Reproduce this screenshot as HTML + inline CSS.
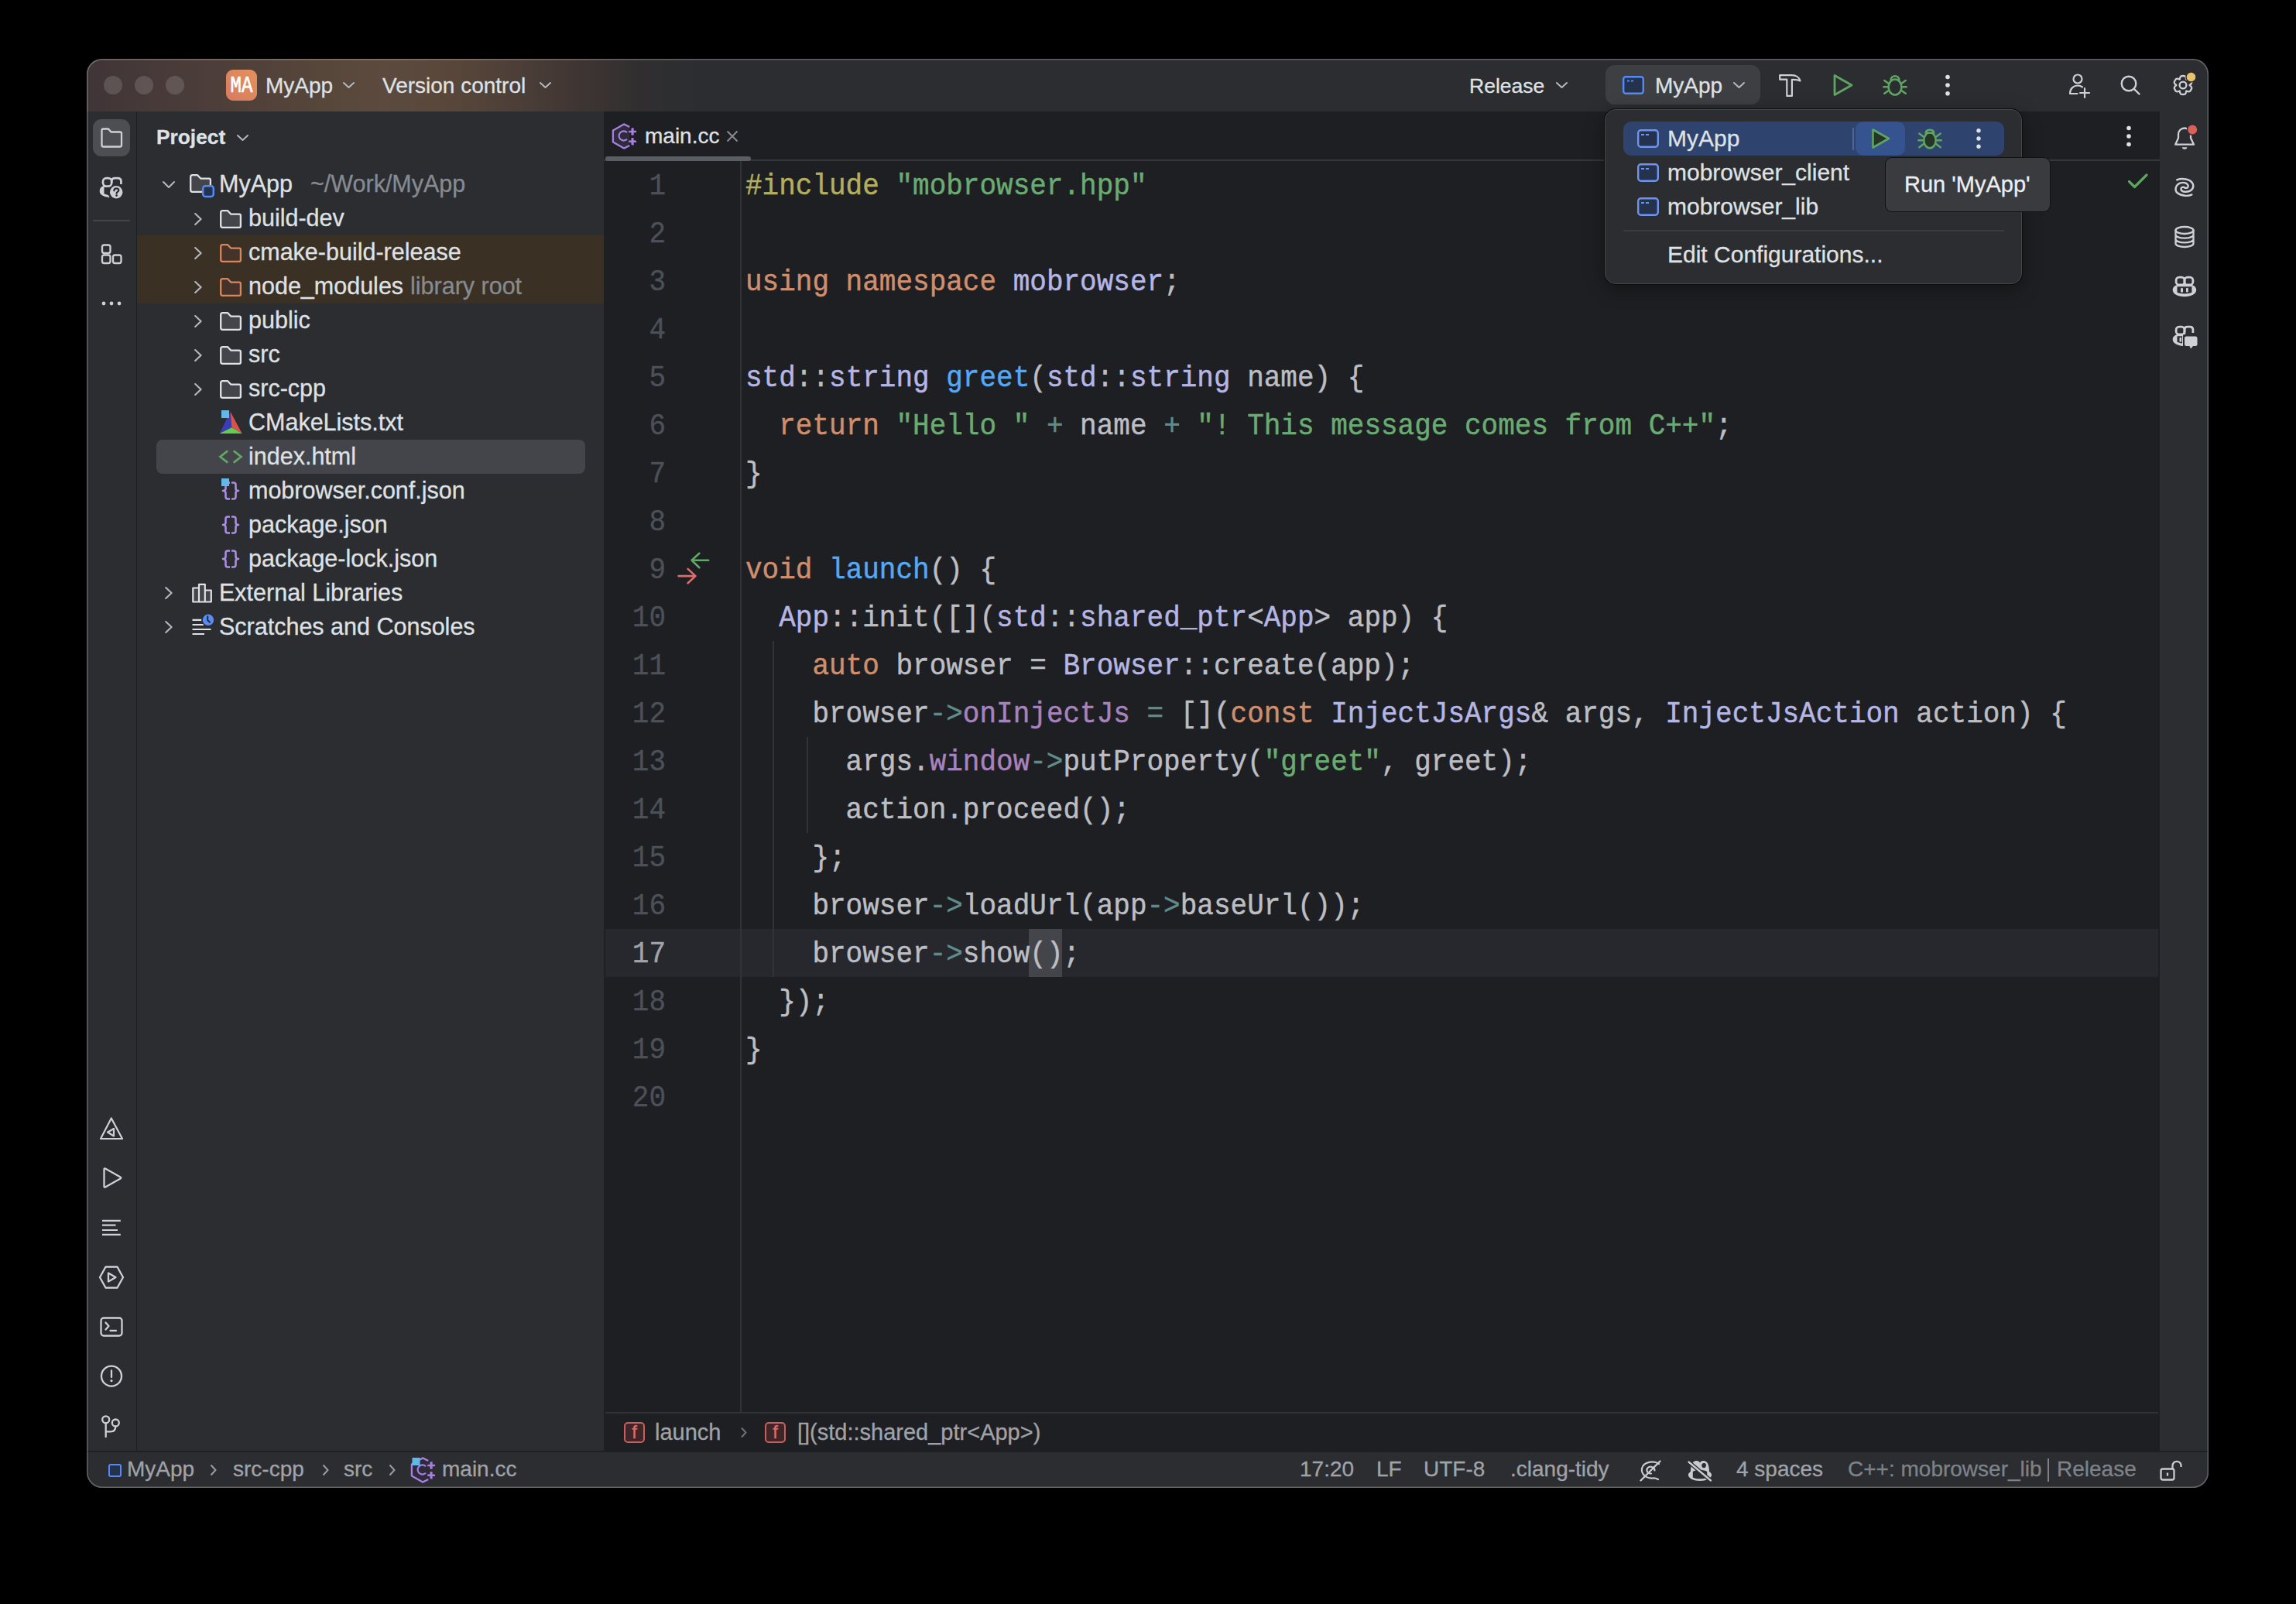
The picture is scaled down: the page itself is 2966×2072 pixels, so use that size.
<!DOCTYPE html>
<html><head><meta charset="utf-8">
<style>
html,body{margin:0;padding:0}
body{width:2966px;height:2072px;background:#000;overflow:hidden;position:relative;font-family:"Liberation Sans",sans-serif;color:#dfe1e5}
.a{position:absolute}
#win{position:absolute;left:112px;top:76px;width:2741px;height:1846px;border-radius:20px;overflow:hidden;background:#2b2d30}
#pg{position:absolute;left:-112px;top:-76px;width:2966px;height:2072px}
#winborder{position:absolute;left:112px;top:76px;width:2741px;height:1846px;border-radius:20px;box-shadow:inset 0 0 0 1.5px rgba(255,255,255,0.26);pointer-events:none}
.t{position:absolute;white-space:pre;line-height:1;-webkit-text-stroke:0.3px currentColor}
svg{position:absolute;overflow:visible}
.ic{fill:none;stroke:#ced0d6;stroke-width:2.4;stroke-linecap:round;stroke-linejoin:round}
.g{stroke:#5fa463}
.code{position:absolute;left:963px;-webkit-text-stroke:0.45px currentColor;transform:scaleY(1.1);transform-origin:0 41px;white-space:pre;font-family:"Liberation Mono",monospace;font-size:36px;line-height:62px;height:62px;color:#bcbec4}
.ln{position:absolute;left:760px;-webkit-text-stroke:0.35px currentColor;transform:scaleY(1.08);transform-origin:0 41px;width:100px;text-align:right;white-space:pre;font-family:"Liberation Mono",monospace;font-size:36px;line-height:62px;height:62px;color:#4b5059}
.ln.cur{color:#a1a3ab}
.k{color:#cf8e6d}.s{color:#6aab73}.f{color:#56a8f5}.ty{color:#b5b6e3}.pp{color:#b3ae60}.fd{color:#a783bd}.op{color:#5f8c8a}
.tr{font-size:30.5px;color:#dfe1e5}
.gr{color:#868a91}
.st{font-size:28px;color:#a0a3a9}
</style></head>
<body>
<div id="win"><div id="pg">
<!-- chrome -->
  <div class="a" style="left:112px;top:76px;width:2741px;height:68px;background:#2b2d30"></div>
  <div class="a" style="left:112px;top:76px;width:820px;height:68px;background:linear-gradient(90deg,#403537 0px,#4a3c39 130px,#564539 290px,#5c4a3f 380px,#584739 470px,#4d3f38 550px,#3e3533 640px,#312f30 710px,#2b2d30 790px)"></div>
  <div class="a" style="left:112px;top:144px;width:64px;height:1730px;background:#2b2d30"></div>
  <div class="a" style="left:176px;top:144px;width:1px;height:1730px;background:#1e1f22"></div>
  <div class="a" style="left:177px;top:144px;width:603px;height:1730px;background:#2b2d30"></div>
  <div class="a" style="left:780px;top:144px;width:2010px;height:1730px;background:#1e1f22"></div>
  <div class="a" style="left:2790px;top:144px;width:63px;height:1730px;background:#2b2d30"></div>
  <div class="a" style="left:112px;top:1874px;width:2741px;height:2px;background:#1e1f22"></div>
  <div class="a" style="left:112px;top:1876px;width:2741px;height:46px;background:#2b2d30"></div>

<!-- titlebar -->
  <div class="a" style="left:134px;top:98px;width:24px;height:24px;border-radius:50%;background:rgba(255,255,255,0.14)"></div>
  <div class="a" style="left:174px;top:98px;width:24px;height:24px;border-radius:50%;background:rgba(255,255,255,0.14)"></div>
  <div class="a" style="left:214px;top:98px;width:24px;height:24px;border-radius:50%;background:rgba(255,255,255,0.14)"></div>
  <div class="a" style="left:292px;top:90px;width:40px;height:40px;border-radius:9px;background:linear-gradient(45deg,#d87a5e,#e3925f)"></div>
  <div class="t" style="left:295px;top:100px;width:34px;text-align:center;font-family:'Liberation Mono',monospace;font-size:24px;-webkit-text-stroke:0.6px #fff;color:#fff;transform:scaleY(1.2);transform-origin:50% 50%">MA</div>
  <div class="t" style="left:343px;top:97px;font-size:28px;color:#dfe1e5">MyApp</div>
  <svg style="left:443px;top:106px" width="15" height="8"><path class="ic" style="stroke:#b4b8bf;stroke-width:2" d="M1 1L7.5 7L14 1"/></svg>
  <div class="t" style="left:494px;top:97px;font-size:28px;color:#dfe1e5">Version control</div>
  <svg style="left:697px;top:106px" width="15" height="8"><path class="ic" style="stroke:#b4b8bf;stroke-width:2" d="M1 1L7.5 7L14 1"/></svg>
  <div class="t" style="left:1898px;top:98px;font-size:26.5px;color:#dfe1e5">Release</div>
  <svg style="left:2010px;top:106px" width="15" height="8"><path class="ic" style="stroke:#b4b8bf;stroke-width:2" d="M1 1L7.5 7L14 1"/></svg>
  <div class="a" style="left:2074px;top:84px;width:200px;height:51px;border-radius:12px;background:#3d3f43"></div>
  <svg style="left:2096px;top:98px" width="28" height="24"><rect x="1.2" y="1.2" width="25.6" height="21.6" rx="3" fill="#25324d" stroke="#548af7" stroke-width="2.4"/><path d="M6 6.5h3M11 6.5h3" stroke="#548af7" stroke-width="2"/></svg>
  <div class="t" style="left:2138px;top:97px;font-size:28px;color:#dfe1e5">MyApp</div>
  <svg style="left:2239px;top:106px" width="15" height="8"><path class="ic" style="stroke:#b4b8bf;stroke-width:2" d="M1 1L7.5 7L14 1"/></svg>
  <!-- hammer -->
  <svg style="left:2296px;top:94px" width="32" height="32" viewBox="0 0 32 32"><path class="ic" style="stroke-width:2.2" d="M3.2 3.2H19C24 3.2 28.3 6 29.5 10.5C27.2 9.2 24 8.7 18.9 8.9V29.9H12.3V8.7H3.2Z"/></svg>
  <!-- run -->
  <svg style="left:2364px;top:94px" width="32" height="32" viewBox="0 0 32 32"><path class="ic g" style="stroke-width:2.8" d="M6 3.5L28 16L6 28.5Z"/></svg>
  <!-- bug -->
  <svg style="left:2432px;top:94px" width="32" height="32" viewBox="0 0 32 32"><g class="ic g" style="stroke-width:2.6"><ellipse cx="16" cy="18.5" rx="8.4" ry="10"/><path d="M10.8 9.2C10.8 2.6 21.2 2.6 21.2 9.2"/><path d="M7.6 13.7L2.3 10M7.6 18.2H1.3M8 22.8L2.3 26.8M24.4 13.7L29.7 10M24.4 18.2H30.7M24 22.8L29.7 26.8"/></g></svg>
  <!-- kebab -->
  <svg style="left:2508px;top:94px" width="16" height="32"><circle cx="8" cy="5.5" r="2.8" fill="#dfe1e5"/><circle cx="8" cy="16" r="2.8" fill="#dfe1e5"/><circle cx="8" cy="26.8" r="2.8" fill="#dfe1e5"/></svg>
  <!-- person+ -->
  <svg style="left:2668px;top:94px" width="32" height="32" viewBox="0 0 32 32"><g class="ic" style="stroke-width:2.2"><circle cx="16" cy="8" r="5.5"/><path d="M15.5 27H6C6 20 11 16.5 16 16.5C18.5 16.5 20.5 17.2 22 18.3"/><path d="M25 20V32M19 26H31"/></g></svg>
  <!-- search -->
  <svg style="left:2735px;top:94px" width="32" height="32" viewBox="0 0 32 32"><g class="ic" style="stroke-width:2.4"><circle cx="15" cy="14" r="9.3"/><path d="M21.8 20.8L28.5 27.5"/></g></svg>
  <!-- gear -->
  <svg style="left:2804px;top:94px" width="32" height="32" viewBox="0 0 32 32"><g class="ic" style="stroke-width:2.3"><path d="M13.51 4.26A12.0 12.0 0 0 1 18.49 4.26Q19.93 5.19 20.30 8.55Q23.39 7.19 24.92 7.97A12.0 12.0 0 0 1 27.41 12.29Q27.33 14.00 24.60 16.00Q27.33 18.00 27.41 19.71A12.0 12.0 0 0 1 24.92 24.03Q23.39 24.81 20.30 23.45Q19.93 26.81 18.49 27.74A12.0 12.0 0 0 1 13.51 27.74Q12.07 26.81 11.70 23.45Q8.61 24.81 7.08 24.03A12.0 12.0 0 0 1 4.59 19.71Q4.67 18.00 7.40 16.00Q4.67 14.00 4.59 12.29A12.0 12.0 0 0 1 7.08 7.97Q8.61 7.19 11.70 8.55Q12.07 5.19 13.51 4.26Z"/><circle cx="16" cy="16" r="4.4"/></g><circle cx="26.5" cy="5.5" r="7.2" fill="#2b2d30"/><circle cx="26.5" cy="5.5" r="5.8" fill="#e9c46d"/></svg>

<!-- leftstripe -->
  <div class="a" style="left:120px;top:154px;width:48px;height:48px;border-radius:11px;background:#4c4e52"></div>
  <svg style="left:128px;top:162px" width="32" height="32" viewBox="0 0 32 32"><path class="ic" style="stroke-width:2.3" d="M3.5 6.5Q3.5 4.5 5.5 4.5H12L15.5 8.5H27Q29 8.5 29 10.5V25.5Q29 27.5 27 27.5H5.5Q3.5 27.5 3.5 25.5Z"/></svg>
  <!-- people ? -->
  <svg style="left:128px;top:226px" width="32" height="32" viewBox="0 0 32 32"><g fill="none" stroke="#ced0d6" stroke-width="2.7" stroke-linejoin="round"><rect x="5" y="4.1" width="11.2" height="10.4" rx="4.2"/><path d="M16.2 10V8.3Q16.2 4.1 20.4 4.1H24.2Q28.4 4.1 28.4 8.3V12"/></g><path fill="#ced0d6" d="M5.2 14.2C2.3 15.2 0.7 17.8 0.7 20.8C0.7 25 4.2 28 13.5 29.2C13 27.6 12.3 26.3 11 25.7C8.5 25 6.5 24.5 6.5 24.5V15.8H12.5L11.5 14.2Z"/><circle cx="22.2" cy="22.2" r="9.3" fill="#2b2d30"/><circle cx="22.2" cy="22.2" r="8.2" fill="#ced0d6"/><path d="M19.4 20.3C19.4 18.4 20.8 17.4 22.4 17.4C24.1 17.4 25.3 18.4 25.3 19.8C25.3 21.6 22.6 21.7 22.6 23.8" fill="none" stroke="#2b2d30" stroke-width="2.3" stroke-linecap="round"/><circle cx="22.6" cy="26.6" r="1.4" fill="#2b2d30"/></svg>
  <div class="a" style="left:120px;top:284px;width:48px;height:2px;background:#43454a"></div>
  <!-- structure -->
  <svg style="left:128px;top:312px" width="32" height="32" viewBox="0 0 32 32"><g class="ic" style="stroke-width:2.3"><rect x="4" y="4.5" width="10.5" height="10.5" rx="2.5"/><rect x="4" y="17.5" width="10.5" height="10.5" rx="2.5"/><rect x="18" y="17.5" width="10.5" height="10.5" rx="2.5"/></g></svg>
  <svg style="left:128px;top:376px" width="32" height="32"><circle cx="6" cy="16" r="2.4" fill="#ced0d6"/><circle cx="16" cy="16" r="2.4" fill="#ced0d6"/><circle cx="26" cy="16" r="2.4" fill="#ced0d6"/></svg>
  <!-- bottom: cmake outline -->
  <svg style="left:128px;top:1442px" width="32" height="32" viewBox="0 0 32 32"><g class="ic" style="stroke-width:2.2"><path d="M15.8 2.5L30 29H2Z"/><path d="M11 20.5L19 16V25.5Z"/></g></svg>
  <!-- run -->
  <svg style="left:128px;top:1506px" width="32" height="32" viewBox="0 0 32 32"><path class="ic" style="stroke-width:2.3" d="M6.5 4.5Q6.5 2.8 8 3.6L27.5 14.5Q29 15.5 27.5 16.5L8 27.4Q6.5 28.2 6.5 26.5Z"/></svg>
  <!-- lines -->
  <svg style="left:128px;top:1570px" width="32" height="32" viewBox="0 0 32 32"><g class="ic" style="stroke-width:2.2;stroke-linecap:butt"><path d="M4 6.8H27.8M4 12.7H21.5M4 19H24M4 24.9H27.8"/></g></svg>
  <!-- services hexagon -->
  <svg style="left:128px;top:1634px" width="32" height="32" viewBox="0 0 32 32"><g class="ic" style="stroke-width:2.3"><path d="M8.5 2.5H23.5L31 16L23.5 29.5H8.5L1 16Z"/><path d="M12 10.5V21.5L21.5 16Z"/></g></svg>
  <!-- terminal -->
  <svg style="left:128px;top:1698px" width="32" height="32" viewBox="0 0 32 32"><g class="ic" style="stroke-width:2.3"><rect x="2.5" y="4.5" width="27" height="23" rx="3.5"/><path d="M8.5 10.5L12.5 15L8.5 19.5M14.5 20.8H22"/></g></svg>
  <!-- problems -->
  <svg style="left:128px;top:1762px" width="32" height="32" viewBox="0 0 32 32"><g class="ic" style="stroke-width:2.3"><circle cx="16" cy="15.6" r="13"/><path d="M16 8.5V17"/></g><circle cx="16" cy="21.6" r="1.6" fill="#ced0d6"/></svg>
  <!-- git -->
  <svg style="left:128px;top:1826px" width="32" height="32" viewBox="0 0 32 32"><g class="ic" style="stroke-width:2.3"><circle cx="8.7" cy="7.8" r="4.5"/><circle cx="21.3" cy="12" r="4.5"/><path d="M8.7 12.3V30M21.3 16.5C21.3 21 19 23.4 14.5 23.4H8.7"/></g></svg>

<!-- tree -->
  <div class="t" style="left:202px;top:164px;font-size:26.3px;font-weight:bold;color:#dfe1e5">Project</div>
  <svg style="left:306px;top:174px" width="15" height="8"><path class="ic" style="stroke:#b4b8bf;stroke-width:2" d="M1 1L7.5 7L14 1"/></svg>
  <div class="a" style="left:177px;top:304px;width:603px;height:88px;background:#3a3024"></div>
  <div class="a" style="left:202px;top:568px;width:554px;height:44px;border-radius:8px;background:#43454a"></div>
  <svg style="left:210px;top:234px" width="16" height="9"><path class="ic" style="stroke:#b4b8bf;stroke-width:2.1" d="M1 1L8 8L15 1"/></svg>
  <svg style="left:245px;top:225px" width="32" height="30"><path d="M1.2 3.6Q1.2 1.2 3.6 1.2H10.2L14.2 5.6H25Q26.9 5.6 26.9 7.6V21Q26.9 22.8 25 22.8H3.5Q1.2 22.8 1.2 20.6Z" fill="#43454a" stroke="#dfe1e5" stroke-width="2.3" stroke-linejoin="round"/><rect x="17.2" y="15.3" width="13.6" height="13.6" rx="3.2" fill="#25324d" stroke="#548af7" stroke-width="2.5"/></svg>
  <div class="t tr" style="left:283px;top:222px">MyApp</div>
  <div class="t tr gr" style="left:401px;top:222px">~/Work/MyApp</div>
  <svg style="left:251px;top:275px" width="10" height="16"><path class="ic" style="stroke:#b4b8bf;stroke-width:2.1" d="M1.2 1L8.6 8L1.2 15"/></svg>
  <svg style="left:284px;top:271px" width="28" height="24"><path d="M1.2 3.6Q1.2 1.2 3.6 1.2H10.2L14.2 5.6H25Q26.9 5.6 26.9 7.6V21Q26.9 22.8 25 22.8H3.5Q1.2 22.8 1.2 20.6Z" fill="#43454a" stroke="#dfe1e5" stroke-width="2.3" stroke-linejoin="round"/></svg>
  <div class="t tr" style="left:321px;top:266px">build-dev</div>
  <svg style="left:251px;top:319px" width="10" height="16"><path class="ic" style="stroke:#b4b8bf;stroke-width:2.1" d="M1.2 1L8.6 8L1.2 15"/></svg>
  <svg style="left:284px;top:315px" width="28" height="24"><path d="M1.2 3.6Q1.2 1.2 3.6 1.2H10.2L14.2 5.6H25Q26.9 5.6 26.9 7.6V21Q26.9 22.8 25 22.8H3.5Q1.2 22.8 1.2 20.6Z" fill="#45332b" stroke="#d8875d" stroke-width="2.3" stroke-linejoin="round"/></svg>
  <div class="t tr" style="left:321px;top:310px">cmake-build-release</div>
  <svg style="left:251px;top:363px" width="10" height="16"><path class="ic" style="stroke:#b4b8bf;stroke-width:2.1" d="M1.2 1L8.6 8L1.2 15"/></svg>
  <svg style="left:284px;top:359px" width="28" height="24"><path d="M1.2 3.6Q1.2 1.2 3.6 1.2H10.2L14.2 5.6H25Q26.9 5.6 26.9 7.6V21Q26.9 22.8 25 22.8H3.5Q1.2 22.8 1.2 20.6Z" fill="#45332b" stroke="#d8875d" stroke-width="2.3" stroke-linejoin="round"/></svg>
  <div class="t tr gr" style="left:530px;top:354px">library root</div>
  <div class="t tr" style="left:321px;top:354px">node_modules</div>
  <svg style="left:251px;top:407px" width="10" height="16"><path class="ic" style="stroke:#b4b8bf;stroke-width:2.1" d="M1.2 1L8.6 8L1.2 15"/></svg>
  <svg style="left:284px;top:403px" width="28" height="24"><path d="M1.2 3.6Q1.2 1.2 3.6 1.2H10.2L14.2 5.6H25Q26.9 5.6 26.9 7.6V21Q26.9 22.8 25 22.8H3.5Q1.2 22.8 1.2 20.6Z" fill="#43454a" stroke="#dfe1e5" stroke-width="2.3" stroke-linejoin="round"/></svg>
  <div class="t tr" style="left:321px;top:398px">public</div>
  <svg style="left:251px;top:451px" width="10" height="16"><path class="ic" style="stroke:#b4b8bf;stroke-width:2.1" d="M1.2 1L8.6 8L1.2 15"/></svg>
  <svg style="left:284px;top:447px" width="28" height="24"><path d="M1.2 3.6Q1.2 1.2 3.6 1.2H10.2L14.2 5.6H25Q26.9 5.6 26.9 7.6V21Q26.9 22.8 25 22.8H3.5Q1.2 22.8 1.2 20.6Z" fill="#43454a" stroke="#dfe1e5" stroke-width="2.3" stroke-linejoin="round"/></svg>
  <div class="t tr" style="left:321px;top:442px">src</div>
  <svg style="left:251px;top:495px" width="10" height="16"><path class="ic" style="stroke:#b4b8bf;stroke-width:2.1" d="M1.2 1L8.6 8L1.2 15"/></svg>
  <svg style="left:284px;top:491px" width="28" height="24"><path d="M1.2 3.6Q1.2 1.2 3.6 1.2H10.2L14.2 5.6H25Q26.9 5.6 26.9 7.6V21Q26.9 22.8 25 22.8H3.5Q1.2 22.8 1.2 20.6Z" fill="#43454a" stroke="#dfe1e5" stroke-width="2.3" stroke-linejoin="round"/></svg>
  <div class="t tr" style="left:321px;top:486px">src-cpp</div>
  <svg style="left:283px;top:529px" width="31" height="32"><polygon points="14.6,2.7 0.6,31 16.3,23.2" fill="#3b3db8"/><polygon points="14.6,2.7 16.3,23.2 29.7,31" fill="#d9534b"/><polygon points="0.6,31 16.3,23.2 29.7,31" fill="#5fd04d"/><rect x="3" y="1" width="10" height="10" fill="#61b9e8"/></svg>
  <div class="t tr" style="left:321px;top:530px">CMakeLists.txt</div>
  <svg style="left:283px;top:580px" width="30" height="20"><path d="M11.2 2.4L1.4 10L11.2 17.6M18.7 2.4L28.6 10L18.7 17.6" fill="none" stroke="#62a766" stroke-width="2.6"/></svg>
  <div class="t tr" style="left:321px;top:574px">index.html</div>
  <svg style="left:286px;top:622px" width="24" height="24"><path d="M11 1.5H8.2Q5.5 1.5 5.5 4.2V9.3Q5.5 12 2 12Q5.5 12 5.5 14.7V19.8Q5.5 22.5 8.2 22.5H11M13 1.5H15.8Q18.5 1.5 18.5 4.2V9.3Q18.5 12 22 12Q18.5 12 18.5 14.7V19.8Q18.5 22.5 15.8 22.5H13" fill="none" stroke="#ab8de3" stroke-width="2.6" stroke-linejoin="round"/></svg>
  <div class="a" style="left:286px;top:618px;width:10px;height:10px;background:#61b9e8"></div>
  <div class="t tr" style="left:321px;top:618px">mobrowser.conf.json</div>
  <svg style="left:286px;top:666px" width="24" height="24"><path d="M11 1.5H8.2Q5.5 1.5 5.5 4.2V9.3Q5.5 12 2 12Q5.5 12 5.5 14.7V19.8Q5.5 22.5 8.2 22.5H11M13 1.5H15.8Q18.5 1.5 18.5 4.2V9.3Q18.5 12 22 12Q18.5 12 18.5 14.7V19.8Q18.5 22.5 15.8 22.5H13" fill="none" stroke="#ab8de3" stroke-width="2.6" stroke-linejoin="round"/></svg>
  <div class="t tr" style="left:321px;top:662px">package.json</div>
  <svg style="left:286px;top:710px" width="24" height="24"><path d="M11 1.5H8.2Q5.5 1.5 5.5 4.2V9.3Q5.5 12 2 12Q5.5 12 5.5 14.7V19.8Q5.5 22.5 8.2 22.5H11M13 1.5H15.8Q18.5 1.5 18.5 4.2V9.3Q18.5 12 22 12Q18.5 12 18.5 14.7V19.8Q18.5 22.5 15.8 22.5H13" fill="none" stroke="#ab8de3" stroke-width="2.6" stroke-linejoin="round"/></svg>
  <div class="t tr" style="left:321px;top:706px">package-lock.json</div>
  <svg style="left:213px;top:758px" width="10" height="16"><path class="ic" style="stroke:#b4b8bf;stroke-width:2.1" d="M1.2 1L8.6 8L1.2 15"/></svg>
  <svg style="left:247px;top:753px" width="28" height="26"><path d="M2.3 6.5H10V1.8H17.8V9.5H25.8V24.5H2.3Z M10 6.5V24.5 M17.8 9.5V24.5" fill="#43454a" stroke="#dfe1e5" stroke-width="2.2" stroke-linejoin="round"/></svg>
  <div class="t tr" style="left:283px;top:750px">External Libraries</div>
  <svg style="left:213px;top:802px" width="10" height="16"><path class="ic" style="stroke:#b4b8bf;stroke-width:2.1" d="M1.2 1L8.6 8L1.2 15"/></svg>
  <svg style="left:247px;top:790px" width="32" height="32"><path d="M1.5 10.8H13.5M1.5 17H16M1.5 23H25.5M1.5 29H17" stroke="#dfe1e5" stroke-width="2.2"/><circle cx="22" cy="10.8" r="8" fill="#5b8af0" stroke="#2b2d30" stroke-width="1.6"/><path d="M21.2 6.2V11L24 13.8" fill="none" stroke="#1e2a4a" stroke-width="2" stroke-linecap="round"/></svg>
  <div class="t tr" style="left:283px;top:794px">Scratches and Consoles</div>

<!-- editor -->
  <!-- tab bar -->
  <div class="a" style="left:780px;top:206px;width:2010px;height:2px;background:#35373b"></div>
  <div class="a" style="left:782px;top:202px;width:188px;height:6px;border-radius:3px;background:#5a5d63"></div>
  <svg style="left:790px;top:159px" width="34" height="34" viewBox="0 0 34 34"><path d="M23.3 5L16 1.4L1.9 9.6V24.4L16 32.6L23.3 29" fill="#2e2b3a" stroke="#a87fe0" stroke-width="2.3" stroke-linejoin="round"/><path d="M20 12.2A6.1 6.1 0 1 0 20 20.8" fill="none" stroke="#a87fe0" stroke-width="2.2"/><path d="M27.5 6.2V15.4M22.9 10.8H32.1M27.5 19.3V28.5M22.9 23.9H32.1" stroke="#a87fe0" stroke-width="2.3"/><path d="M26.6 6.8V15.6M22.2 11.2H31M26.6 19.2V28M22.2 23.6H31" stroke="#a87fe0" stroke-width="2.3"/></svg>
  <div class="t" style="left:833px;top:162px;font-size:28px;color:#dfe1e5">main.cc</div>
  <svg style="left:938px;top:168px" width="16" height="16"><path d="M1.5 1.5L14.5 14.5M14.5 1.5L1.5 14.5" stroke="#868a91" stroke-width="2"/></svg>
  <svg style="left:2742px;top:160px" width="16" height="32"><circle cx="8" cy="5.5" r="2.8" fill="#dfe1e5"/><circle cx="8" cy="16" r="2.8" fill="#dfe1e5"/><circle cx="8" cy="26.5" r="2.8" fill="#dfe1e5"/></svg>
  <svg style="left:2748px;top:222px" width="28" height="24"><path d="M2.5 12.5L9.5 19.5L25 4" fill="none" stroke="#5fa463" stroke-width="3.2" stroke-linecap="round" stroke-linejoin="round"/></svg>
  <!-- current line -->
  <div class="a" style="left:782px;top:1200px;width:2006px;height:62px;background:#26282e"></div>
  <div class="a" style="left:1329px;top:1200px;width:43px;height:62px;background:#43454a"></div>
  <!-- gutter separator & indent guides -->
  <div class="a" style="left:956px;top:208px;width:2px;height:1616px;background:#313338"></div>
  <div class="a" style="left:998px;top:828px;width:2px;height:434px;background:#313338"></div>
  <div class="a" style="left:1042px;top:952px;width:2px;height:124px;background:#313338"></div>
  <!-- gutter arrows line 9 -->
  <svg style="left:870px;top:708px" width="50" height="50"><g fill="none" stroke-width="2.6" stroke-linecap="round" stroke-linejoin="round"><path d="M45.2 15.8H23.6M33.4 6.8L23.6 15.8L33.4 25.2" stroke="#62a766"/><path d="M6.6 36.1H28.4M18.6 26.9L28.4 36.1L18.6 45.3" stroke="#e06c6c"/></g></svg>
  <!-- breadcrumbs -->
  <div class="a" style="left:782px;top:1824px;width:2006px;height:2px;background:#2f3135"></div>
  <div class="a" style="left:806px;top:1837px;width:23px;height:23px;border:2px solid #c9605d;border-radius:5px;background:#3d2528"></div>
  <div class="t" style="left:806px;top:1838px;width:27px;text-align:center;font-size:24px;color:#e06c6c">f</div>
  <div class="t" style="left:846px;top:1836px;font-size:29px;color:#a0a3a9">launch</div>
  <svg style="left:956px;top:1843px" width="10" height="15"><path d="M2 1.5L7.5 7.5L2 13.5" fill="none" stroke="#6f737a" stroke-width="2"/></svg>
  <div class="a" style="left:988px;top:1837px;width:23px;height:23px;border:2px solid #c9605d;border-radius:5px;background:#3d2528"></div>
  <div class="t" style="left:988px;top:1838px;width:27px;text-align:center;font-size:24px;color:#e06c6c">f</div>
  <div class="t" style="left:1030px;top:1836px;font-size:29px;color:#a0a3a9">[](std::shared_ptr&lt;App&gt;)</div>

<!-- code -->
  <div class="ln" style="top:211px">1</div>
  <div class="code" style="top:211px"><span class="pp">#include</span> <span class="s">"mobrowser.hpp"</span></div>
  <div class="ln" style="top:273px">2</div>
  <div class="code" style="top:273px"></div>
  <div class="ln" style="top:335px">3</div>
  <div class="code" style="top:335px"><span class="k">using namespace</span> <span class="ty">mobrowser</span>;</div>
  <div class="ln" style="top:397px">4</div>
  <div class="code" style="top:397px"></div>
  <div class="ln" style="top:459px">5</div>
  <div class="code" style="top:459px"><span class="ty">std</span>::<span class="ty">string</span> <span class="f">greet</span>(<span class="ty">std</span>::<span class="ty">string</span> name) {</div>
  <div class="ln" style="top:521px">6</div>
  <div class="code" style="top:521px">  <span class="k">return</span> <span class="s">"Hello "</span> <span class="op">+</span> name <span class="op">+</span> <span class="s">"! This message comes from C++"</span>;</div>
  <div class="ln" style="top:583px">7</div>
  <div class="code" style="top:583px">}</div>
  <div class="ln" style="top:645px">8</div>
  <div class="code" style="top:645px"></div>
  <div class="ln" style="top:707px">9</div>
  <div class="code" style="top:707px"><span class="k">void</span> <span class="f">launch</span>() {</div>
  <div class="ln" style="top:769px">10</div>
  <div class="code" style="top:769px">  <span class="ty">App</span>::init([](<span class="ty">std</span>::<span class="ty">shared_ptr</span>&lt;<span class="ty">App</span>&gt; app) {</div>
  <div class="ln" style="top:831px">11</div>
  <div class="code" style="top:831px">    <span class="k">auto</span> browser = <span class="ty">Browser</span>::create(app);</div>
  <div class="ln" style="top:893px">12</div>
  <div class="code" style="top:893px">    browser<span class="op">-&gt;</span><span class="fd">onInjectJs</span> <span class="op">=</span> [](<span class="k">const</span> <span class="ty">InjectJsArgs</span>&amp; args, <span class="ty">InjectJsAction</span> action) {</div>
  <div class="ln" style="top:955px">13</div>
  <div class="code" style="top:955px">      args.<span class="fd">window</span><span class="op">-&gt;</span>putProperty(<span class="s">"greet"</span>, greet);</div>
  <div class="ln" style="top:1017px">14</div>
  <div class="code" style="top:1017px">      action.proceed();</div>
  <div class="ln" style="top:1079px">15</div>
  <div class="code" style="top:1079px">    };</div>
  <div class="ln" style="top:1141px">16</div>
  <div class="code" style="top:1141px">    browser<span class="op">-&gt;</span>loadUrl(app<span class="op">-&gt;</span>baseUrl());</div>
  <div class="ln cur" style="top:1203px">17</div>
  <div class="code" style="top:1203px">    browser<span class="op">-&gt;</span>show<span class="bm">(</span><span class="bm">)</span>;</div>
  <div class="ln" style="top:1265px">18</div>
  <div class="code" style="top:1265px">  });</div>
  <div class="ln" style="top:1327px">19</div>
  <div class="code" style="top:1327px">}</div>
  <div class="ln" style="top:1389px">20</div>
  <div class="code" style="top:1389px"></div>

<!-- rightstripe -->
  <!-- bell -->
  <svg style="left:2806px;top:161px" width="32" height="32" viewBox="0 0 32 32"><path class="ic" style="stroke-width:2.3" d="M8 12.5V17.3L4.2 25.7H28L24 17.3V12.5C24 7.8 20.4 4.5 16 4.5C11.6 4.5 8 7.8 8 12.5Z"/><path d="M12.8 29.2H19.4C19 31 17.8 31.8 16.1 31.8C14.4 31.8 13.2 31 12.8 29.2Z" fill="#ced0d6"/><circle cx="26.2" cy="6.5" r="7.4" fill="#2b2d30"/><circle cx="26.2" cy="6.5" r="6" fill="#db5f5a"/></svg>
  <!-- swirl -->
  <svg style="left:2806px;top:226px" width="32" height="32" viewBox="0 0 32 32"><g class="ic" style="stroke-width:2.4"><path d="M6.2 6.3C12 4 24 4.5 26.9 12C28.5 17 25 21.3 17.7 21.7C13 22 11 19.5 11.5 17.5C12.3 15.2 15.2 15.3 16.7 16.7"/><path d="M25.4 25.4C21 27.6 12 27.6 6.5 23C3.5 20.5 3.5 13.5 10 10.6C14 9.2 19 9.6 20.7 13.6C21.3 15.8 19.5 17.5 16.7 16.7"/></g></svg>
  <!-- db -->
  <svg style="left:2806px;top:290px" width="32" height="32" viewBox="0 0 32 32"><g class="ic" style="stroke-width:2.3"><ellipse cx="16" cy="7.5" rx="11.5" ry="4.5"/><path d="M4.5 7.5V24.5C4.5 27 9.5 29 16 29C22.5 29 27.5 27 27.5 24.5V7.5M4.5 13.2C4.5 15.7 9.5 17.7 16 17.7C22.5 17.7 27.5 15.7 27.5 13.2M4.5 18.9C4.5 21.4 9.5 23.4 16 23.4C22.5 23.4 27.5 21.4 27.5 18.9"/></g></svg>
  <!-- copilot -->
  <svg style="left:2806px;top:354px" width="32" height="32" viewBox="0 0 32 32"><g fill="none" stroke="#ced0d6" stroke-width="2.8"><rect x="5.1" y="4.1" width="11" height="9.8" rx="4"/><rect x="15.9" y="4.1" width="11" height="9.8" rx="4"/></g><path fill="#ced0d6" fill-rule="evenodd" d="M6.5 14H25.5C29 15 31.2 17.5 31.2 20.5C31.2 25.5 25 29.2 16 29.2C7 29.2 0.7 25.5 0.7 20.5C0.7 17.5 3 15 6.5 14ZM6.5 16.2H25.4V23.8C23 25 20 25.5 16 25.5C12 25.5 9 25 6.5 23.8Z"/><rect x="11" y="17.7" width="3" height="6" rx="1.5" fill="#ced0d6"/><rect x="18" y="17.7" width="2.8" height="6" rx="1.4" fill="#ced0d6"/></svg>
  <!-- copilot chat -->
  <svg style="left:2806px;top:418px" width="32" height="32" viewBox="0 0 32 32"><g fill="none" stroke="#ced0d6" stroke-width="2.8"><rect x="5.1" y="4.1" width="11" height="9.8" rx="4"/><path d="M15.9 13.9V8.1Q15.9 4.1 19.9 4.1H22.9Q26.9 4.1 26.9 8.1V12"/></g><path fill="#ced0d6" fill-rule="evenodd" d="M6.5 14H14V29C6.5 28.5 0.7 25 0.7 20.5C0.7 17.5 3 15 6.5 14ZM6.5 16.2H13V25.4C10.5 25.2 8.3 24.7 6.5 23.8Z"/><rect x="9.5" y="17.7" width="2.6" height="6" rx="1.3" fill="#ced0d6"/><path fill="#2b2d30" d="M14.5 14.5H32V32H14.5Z"/><path fill="#ced0d6" d="M18.5 16.5H30Q32.5 16.5 32.5 19V26.5Q32.5 29 30 29H27L24 32.5L22.5 29H18.5Q16 29 16 26.5V19Q16 16.5 18.5 16.5Z"/></svg>

<!-- status -->
  <div class="a" style="left:140px;top:1891px;width:13px;height:13px;border:2px solid #548af7;border-radius:3px;background:#25324d"></div>
  <div class="t st" style="left:164px;top:1884px">MyApp</div>
  <svg style="left:271px;top:1891px" width="10" height="16"><path d="M1.5 1.5L7.5 8L1.5 14.5" fill="none" stroke="#9a9da3" stroke-width="2"/></svg>
  <div class="t st" style="left:301px;top:1884px">src-cpp</div>
  <svg style="left:416px;top:1891px" width="10" height="16"><path d="M1.5 1.5L7.5 8L1.5 14.5" fill="none" stroke="#9a9da3" stroke-width="2"/></svg>
  <div class="t st" style="left:444px;top:1884px">src</div>
  <svg style="left:502px;top:1891px" width="10" height="16"><path d="M1.5 1.5L7.5 8L1.5 14.5" fill="none" stroke="#9a9da3" stroke-width="2"/></svg>
  <svg style="left:530px;top:1882px" width="34" height="34" viewBox="0 0 34 34"><path d="M23.3 5L16 1.4L1.9 9.6V24.4L16 32.6L23.3 29" fill="#2e2b3a" stroke="#a87fe0" stroke-width="2.3" stroke-linejoin="round"/><path d="M20 12.2A6.1 6.1 0 1 0 20 20.8" fill="none" stroke="#a87fe0" stroke-width="2.2"/><path d="M27.5 6.2V15.4M22.9 10.8H32.1M27.5 19.3V28.5M22.9 23.9H32.1" stroke="#a87fe0" stroke-width="2.3"/><path d="M26.6 6.8V15.6M22.2 11.2H31M26.6 19.2V28M22.2 23.6H31" stroke="#a87fe0" stroke-width="2.3"/><rect x="2.5" y="1" width="10" height="10" fill="#61b9e8"/></svg>
  <div class="t st" style="left:571px;top:1884px">main.cc</div>
  <div class="t st" style="left:1679px;top:1884px">17:20</div>
  <div class="t st" style="left:1778px;top:1884px">LF</div>
  <div class="t st" style="left:1839px;top:1884px">UTF-8</div>
  <div class="t st" style="left:1951px;top:1884px">.clang-tidy</div>
  <svg style="left:2116px;top:1884px" width="32" height="32" viewBox="0 0 32 32"><g fill="none" stroke="#c9cbd0" stroke-width="2.2" stroke-linecap="round"><path d="M27 7C20.5 2.5 7 4 5 13C4 20 10 26 19 25.5C21.5 25.3 23.8 25.7 26 27"/><path d="M17 19.5C12 19.5 10 15 12.5 12.3C15 9.5 21.5 10.5 21.5 15.5"/><path d="M3.5 28.5L28.5 3.5" stroke-width="2.4"/></g></svg>
  <svg style="left:2180px;top:1885px" width="32" height="30" viewBox="0 0 32 30"><path fill="#c9cbd0" d="M4 16C4 10 5 3 10.5 2C13.5 1.5 15.5 3 16 4.5C16.5 3 18.5 1.5 21.5 2C27 3 28 10 28 16C30 17 31.5 19 31 21C30 25 24 28 16 28C8 28 2 25 1 21C0.5 19 2 17 4 16Z"/><path fill="#2b2d30" d="M18.5 6.5C19.5 4.5 23.2 4.5 23.8 6.5C24.2 9 23.5 11.4 21 11.2C18.5 11 17.8 8.5 18.5 6.5ZM6.8 16C9 14.5 12 14 16 14C20 14 23 14.5 25.2 16V23.5C23 24.8 20 25.3 16 25.3C12 25.3 9 24.8 6.8 23.5Z"/><path d="M1.5 3.5L30 27.5" stroke="#2b2d30" stroke-width="5"/><path d="M1.5 3.5L30 27.5" stroke="#c9cbd0" stroke-width="2.3" stroke-linecap="round"/></svg>
  <div class="t st" style="left:2243px;top:1884px">4 spaces</div>
  <div class="t st" style="left:2387px;top:1884px;color:#7e8289">C++: mobrowser_lib</div>
  <div class="a" style="left:2645px;top:1884px;width:2px;height:30px;background:#7e8289"></div>
  <div class="t st" style="left:2657px;top:1884px;color:#7e8289">Release</div>
  <svg style="left:2788px;top:1884px" width="32" height="32" viewBox="0 0 32 32"><g fill="none" stroke="#c9cbd0" stroke-width="2.3" stroke-linejoin="round"><rect x="3.5" y="13.5" width="17" height="14" rx="2.5"/><path d="M18.5 13.5V9.5C18.5 6 21 3.8 24 3.8C27 3.8 29.5 6 29.5 9.5V11"/><path d="M12 18.5V22.5"/></g></svg>

<!-- popup -->
  <div class="a" style="left:2072px;top:140px;width:541px;height:228px;border-radius:15px;background:#0d0d0e;box-shadow:0 6px 24px rgba(0,0,0,0.35)"></div>
  <div class="a" style="left:2073px;top:141px;width:537px;height:224px;border-radius:14px;background:#2b2d30;border:1px solid #45474b"></div>
  <div class="a" style="left:2097px;top:157px;width:492px;height:44px;border-radius:10px;background:#2e436e"></div>
  <div class="a" style="left:2397px;top:157px;width:64px;height:44px;border-radius:10px;background:#35538f"></div>
  <div class="a" style="left:2393px;top:165px;width:2px;height:29px;background:#4f6696"></div>
  <svg style="left:2115px;top:167px" width="28" height="24"><rect x="1.2" y="1.2" width="25.6" height="21.6" rx="3.5" fill="#25324d" stroke="#6e94ee" stroke-width="2.4"/><path d="M5 7H9M11 7H15" stroke="#6e94ee" stroke-width="2.2"/></svg>
  <div class="t tr" style="left:2154px;top:164px;font-size:30px">MyApp</div>
  <svg style="left:2115px;top:211px" width="28" height="24"><rect x="1.2" y="1.2" width="25.6" height="21.6" rx="3.5" fill="#25324d" stroke="#6e94ee" stroke-width="2.4"/><path d="M5 7H9M11 7H15" stroke="#6e94ee" stroke-width="2.2"/></svg>
  <div class="t tr" style="left:2154px;top:208px;font-size:30px">mobrowser_client</div>
  <svg style="left:2115px;top:255px" width="28" height="24"><rect x="1.2" y="1.2" width="25.6" height="21.6" rx="3.5" fill="#25324d" stroke="#6e94ee" stroke-width="2.4"/><path d="M5 7H9M11 7H15" stroke="#6e94ee" stroke-width="2.2"/></svg>
  <div class="t tr" style="left:2154px;top:252px;font-size:30px">mobrowser_lib</div>
  <div class="a" style="left:2097px;top:297px;width:492px;height:2px;background:#393b40"></div>
  <div class="t tr" style="left:2154px;top:314px;font-size:30px">Edit Configurations...</div>
  <!-- row buttons -->
  <svg style="left:2413px;top:163px" width="32" height="32" viewBox="0 0 32 32"><path d="M6.5 4.5L27 16L6.5 27.5Z" fill="#253627" stroke="#5fa463" stroke-width="2.6" stroke-linejoin="round"/></svg>
  <svg style="left:2477px;top:163px" width="32" height="32" viewBox="0 0 32 32"><ellipse cx="16" cy="18.3" rx="7.7" ry="10" fill="#253627" stroke="#5fa463" stroke-width="2.5"/><path d="M10.8 8.6C10.8 3.3 21.2 3.3 21.2 8.6Z" fill="#253627" stroke="#5fa463" stroke-width="2.5"/><path d="M8 13.7L2.3 9.5M8 18.2H1.3M8.3 22.8L2.3 27.2M24 13.7L29.7 9.5M24 18.2H30.7M23.7 22.8L29.7 27.2" stroke="#5fa463" stroke-width="2.5" stroke-linecap="round"/></svg>
  <svg style="left:2548px;top:163px" width="16" height="32"><circle cx="8" cy="5.8" r="2.7" fill="#dfe1e5"/><circle cx="8" cy="16" r="2.7" fill="#dfe1e5"/><circle cx="8" cy="26.2" r="2.7" fill="#dfe1e5"/></svg>
  <!-- tooltip -->
  <div class="a" style="left:2435px;top:203px;width:214px;height:71px;border-radius:9px;background:#111113"></div>
  <div class="a" style="left:2436px;top:204px;width:212px;height:69px;border-radius:8px;background:#3a3b3f"></div>
  <div class="t" style="left:2460px;top:224px;font-size:29px;color:#eceef2">Run 'MyApp'</div>

</div></div>
<div id="winborder"></div>
</body></html>
